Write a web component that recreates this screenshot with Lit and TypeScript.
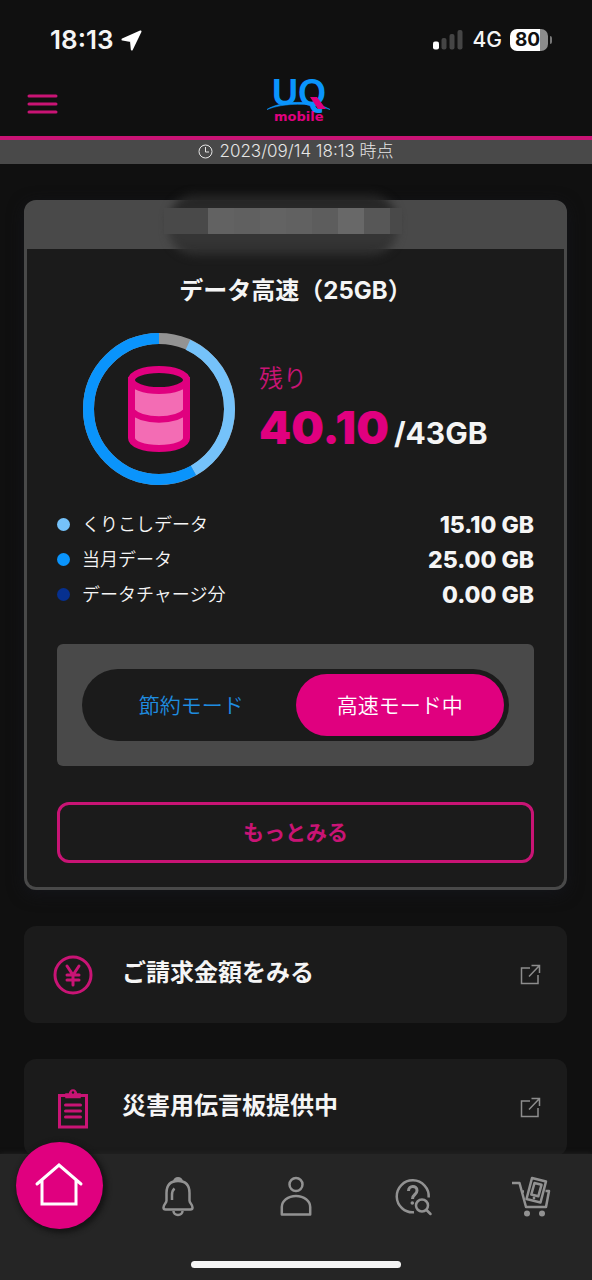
import { LitElement, html, svg, css } from "lit";
import { customElement, state } from "lit/decorators.js";
import { classMap } from "lit/directives/class-map.js";
import { styleMap } from "lit/directives/style-map.js";

interface DataBucket {
  label: string;
  amount: number;
  color: string;
}

const TOTAL_GB = 43;
const BUCKETS: DataBucket[] = [
  { label: "くりこしデータ", amount: 15.1, color: "#75c2fa" },
  { label: "当月データ", amount: 25, color: "#0a94fc" },
  { label: "データチャージ分", amount: 0, color: "#06308f" },
];
const REMAINING = BUCKETS.reduce((sum, b) => sum + b.amount, 0);

const yenIcon = svg`
  <circle cx="20" cy="20" r="18"/>
  <path d="M14 11l6 9 6-9M20 20v10M14 20h12M14 25h12" stroke-width="3"/>`;

const clipboardIcon = svg`
  <path d="M6.500 7.500h27v31.500h-27z"/>
  <path d="M13 9.500v-3.500h3.500a3.500 4 0 0 1 7 0h3.500v3.500z" fill="currentColor" stroke-width="1.500"/>
  <circle cx="20" cy="4.500" r="1.200" fill="#1b1b1b" stroke="none"/>
  <path d="M12.500 17h15M12.500 23h15M12.500 29h15" stroke-width="3"/>`;

const LINKS = [
  { label: "ご請求金額をみる", icon: yenIcon },
  { label: "災害用伝言板提供中", icon: clipboardIcon },
];

const TABS = [
  {
    label: "お知らせ",
    icon: svg`
      <path d="M16.500 4.500a3.500 3 0 0 1 7 0" stroke-width="3"/>
      <path d="M20 4c-8 0-11.500 5-11.500 12v7.500c0 3-3 3.500-3 7 0 1.500.8 2 2 2h25c1.200 0 2-.5 2-2 0-3.500-3-4-3-7v-7.500c0-7-3.500-12-11.500-12z"/>
      <path d="M14 23v-5c0-3 .7-5 2.500-6.500"/>
      <path d="M15.500 34a4.500 4 0 0 0 9 0"/>`,
  },
  {
    label: "お客さま情報",
    icon: svg`
      <circle cx="20" cy="7.500" r="6.500"/>
      <path d="M5.800 37.500v-7.500c0-6 6-11 14.200-11s14.200 5 14.200 11v7.500z"/>`,
  },
  {
    label: "サポート",
    icon: svg`
      <path d="M20 35.300a16 16 0 1 1 14.700-14.800"/>
      <path d="M14.500 14c0-6 8.500-6 8.500-.5 0 4.500-4.500 3.500-4.500 8.500" stroke-width="3"/>
      <circle cx="18.300" cy="26" r="1.800" fill="currentColor" stroke="none"/>
      <circle cx="28" cy="28.500" r="6"/>
      <path d="M32.500 33l4 4" stroke-linecap="round"/>`,
  },
  {
    label: "ショップ",
    icon: svg`
      <g transform="translate(-2 0)">
        <path d="M1 6h7.500l6.500 24h20l3-16h-3.500M11 14.500h2"/>
        <path d="M21 1l14 3.500-5.500 21-14-3.500z"/>
        <path d="M23.500 6l7 1.800-3.200 11.500-7-1.800z"/>
        <circle cx="23" cy="21" r="1.400" fill="currentColor" stroke="none"/>
        <circle cx="16" cy="36.500" r="3" fill="currentColor" stroke="none"/>
        <circle cx="31" cy="36.500" r="3" fill="currentColor" stroke="none"/>
      </g>`,
  },
];

@customElement("data-ring")
class DataRing extends LitElement {
  static styles = css`
    :host {
      display: grid;
      place-items: center;
      width: 152px;
      height: 152px;
    }
    .ring,
    .drum {
      grid-area: 1 / 1;
      display: block;
    }
    .ring {
      width: 100%;
      height: 100%;
      transform: rotate(-90deg);
    }
    .slice {
      fill: none;
      stroke-width: 11;
    }
  `;

  render() {
    let start = TOTAL_GB - REMAINING;
    const slices = BUCKETS.filter((b) => b.amount > 0).map((b) => {
      const slice = svg`<circle class="slice" cx="76" cy="76" r="70.500" stroke=${b.color}
        pathLength=${TOTAL_GB} stroke-dasharray="${b.amount} ${TOTAL_GB}" stroke-dashoffset=${-start}/>`;
      start += b.amount;
      return slice;
    });
    return html`
      <svg class="ring" viewBox="0 0 152 152" aria-hidden="true">
        <circle class="slice" cx="76" cy="76" r="70.500" stroke="#939393"></circle>
        ${slices}
      </svg>
      <svg class="drum" width="62" height="86" viewBox="0 0 62 86" aria-hidden="true">
        <path d="M3.500 14.500V72c0 6 12 10.500 27.500 10.500S58.500 78 58.500 72V14.500z" fill="#f36cb4" stroke="#e0007f" stroke-width="7"/>
        <ellipse cx="31" cy="14" rx="27.500" ry="10.500" fill="#1b1b1b" stroke="#e0007f" stroke-width="7"/>
        <path d="M3.500 45c5 5 14 8.500 27.500 8.500s22.500-3.500 27.500-8.500" fill="none" stroke="#e0007f" stroke-width="6.500"/>
      </svg>
    `;
  }
}

@customElement("app-root")
class AppRoot extends LitElement {
  @state() private fast = true;

  static styles = css`
    :host {
      --pink: #e0007f;
      --rose: #c91475;
      --panel: #1b1b1b;
      --edge: #494949;
      --white: #f5f5f5;
      --ui: Inter, "Noto Sans CJK JP", sans-serif;
      --jp: "Noto Sans CJK JP", sans-serif;
      display: block;
      min-height: 100vh;
      background: #101010;
      color: var(--white);
      font-family: var(--jp);
    }
    * {
      box-sizing: border-box;
    }
    button {
      border: 0;
      padding: 0;
      background: none;
      font: inherit;
      color: inherit;
      cursor: pointer;
    }
    a {
      color: inherit;
      text-decoration: none;
    }
    svg {
      display: block;
      flex: none;
      overflow: visible;
    }
    .status {
      display: flex;
      justify-content: space-between;
      align-items: center;
      height: 72px;
      padding: 8px 40px 0 50px;
      font-family: var(--ui);
    }
    .clock,
    .signal {
      display: flex;
      align-items: center;
      gap: 8px;
    }
    .clock {
      font-size: 26px;
      font-weight: 600;
      line-height: 32px;
    }
    .signal {
      font-size: 21px;
      font-weight: 500;
      line-height: 32px;
    }
    .battery {
      display: flex;
      align-items: center;
      gap: 2px;
    }
    .level {
      width: 38px;
      height: 22px;
      padding-right: 3px;
      border-radius: 7px;
      background: linear-gradient(90deg, #fff 80%, #8b8b8b 80%);
      color: #111;
      font-size: 19px;
      font-weight: 700;
      line-height: 22px;
      text-align: center;
    }
    .tip {
      width: 2px;
      height: 8px;
      border-radius: 0 2px 2px 0;
      background: #777;
    }
    .header {
      display: grid;
      grid-template-columns: 1fr auto 1fr;
      align-items: center;
      height: 68px;
      padding: 0 21px 0 27px;
      border-bottom: 4px solid var(--rose);
    }
    .menu {
      justify-self: start;
      color: var(--rose);
    }
    .mark {
      font: 700 36px "Liberation Sans", sans-serif;
      fill: #0a94fc;
    }
    .sub {
      font: 700 13px "DejaVu Sans", sans-serif;
      fill: var(--pink);
    }
    .asof {
      display: flex;
      justify-content: center;
      align-items: center;
      gap: 6px;
      height: 24px;
      padding-bottom: 2px;
      background: var(--edge);
      color: #e6e6e6;
      font-family: var(--ui);
      font-size: 17px;
      font-weight: 300;
      line-height: 20px;
    }
    .content {
      display: flex;
      flex-direction: column;
      gap: 36px;
      padding: 36px 25px 0 24px;
    }
    .card {
      border: 3px solid var(--edge);
      border-radius: 12px;
      background: var(--edge);
      box-shadow: 0 4px 16px #14151a;
    }
    .owner {
      display: flex;
      justify-content: center;
      height: 46px;
      padding-top: 5px;
      position: relative;
    }
    .smudge {
      position: absolute;
      top: -9px;
      width: 230px;
      height: 62px;
      left: 50%;
      margin-left: -128px;
      border-radius: 28px;
      background: linear-gradient(#222, #373737 70%, #2b2b2b);
      filter: blur(4px);
    }
    .mosaic {
      position: relative;
      display: flex;
      height: 26px;
      padding: 0 12px 0 44px;
      margin-right: 26px;
      background: var(--edge);
    }
    .tile {
      width: 26px;
    }
    .body {
      display: flex;
      flex-direction: column;
      padding: 24px 30px;
      border-radius: 0 0 9px 9px;
      background: var(--panel);
    }
    .title {
      margin: 0;
      font-family: var(--ui);
      font-size: 24px;
      font-weight: 700;
      line-height: 36px;
      text-align: center;
    }
    .usage {
      display: flex;
      align-items: center;
      gap: 24px;
      margin-top: 24px;
      padding-left: 26px;
    }
    .reading {
      padding-top: 6px;
    }
    .left {
      color: var(--rose);
      font-size: 24px;
      font-weight: 350;
      line-height: 36px;
    }
    .figures {
      display: flex;
      align-items: baseline;
      gap: 5px;
      font-family: var(--ui);
      line-height: 64px;
    }
    .remain {
      color: var(--pink);
      font-size: 46px;
      font-weight: 900;
    }
    .total {
      font-size: 30px;
      font-weight: 700;
    }
    .legend {
      margin: 22px 0 0;
    }
    .row {
      display: flex;
      align-items: center;
      gap: 12px;
      height: 35px;
    }
    .dot {
      width: 13px;
      height: 13px;
      border-radius: 50%;
    }
    .name {
      flex: 1;
      padding-bottom: 4px;
      font-size: 18px;
      font-weight: 350;
    }
    .amount {
      margin: 0;
      font-family: var(--ui);
      font-size: 23px;
      font-weight: 800;
    }
    .modes {
      margin-top: 32px;
      padding: 25px;
      border-radius: 6px;
      background: var(--edge);
    }
    .switch {
      display: grid;
      grid-template-columns: 1fr 1fr;
      height: 72px;
      padding: 5px;
      border-radius: 36px;
      background: var(--panel);
    }
    .mode {
      padding-bottom: 3px;
      border-radius: 31px;
      color: #1f8de0;
      font-size: 21px;
      font-weight: 350;
    }
    .mode.on {
      background: var(--pink);
      color: #fff;
    }
    .more {
      height: 61px;
      margin-top: 36px;
      padding-bottom: 4px;
      border: 3px solid var(--rose);
      border-radius: 12px;
      color: var(--rose);
      font-size: 21px;
      font-weight: 700;
    }
    .link {
      display: flex;
      align-items: center;
      gap: 29px;
      height: 97px;
      padding: 0 26px 0 29px;
      border-radius: 12px;
      background: var(--panel);
      font-size: 24px;
      font-weight: 700;
    }
    .glyph {
      color: var(--rose);
    }
    .text {
      flex: 1;
      padding-bottom: 8px;
    }
    .out {
      color: #8d8d8d;
    }
    .tabs {
      position: fixed;
      right: 0;
      bottom: 0;
      left: 0;
      padding-bottom: 12px;
      background: #252525;
      box-shadow: 0 0 5px #252525;
    }
    .tablist {
      display: grid;
      grid-template-columns: repeat(5, 1fr);
      height: 107px;
    }
    .tab {
      display: grid;
      place-items: center;
      padding-bottom: 22px;
      color: #929292;
    }
    .home {
      justify-self: center;
      display: grid;
      place-items: center;
      width: 87px;
      height: 87px;
      margin-top: -12px;
      padding-bottom: 4px;
      border-radius: 50%;
      background: var(--pink);
      box-shadow: 2px 2px 5px 2px #151515;
      color: #fff;
    }
    .grip {
      width: 210px;
      height: 7px;
      margin: 0 auto;
      border-radius: 4px;
      background: var(--white);
    }
  `;

  render() {
    const mosaic = ["#626262", "#606060", "#636363", "#616161", "#5d5d5d", "#686868", "#575757"];
    return html`
      <div class="status">
        <div class="clock">
          18:13
          <svg width="21" height="21" viewBox="0 0 21 21" aria-hidden="true">
            <path d="M19.500 1.500L1.500 9.500l8.500 1.500.8 8.500z" fill="#fff" stroke="#fff" stroke-width="2" stroke-linejoin="round" />
          </svg>
        </div>
        <div class="signal">
          <svg width="32" height="20" viewBox="0 0 32 20" aria-hidden="true">
            <rect x="0" y="11.500" width="6" height="8" rx="2" fill="#fff" />
            <rect x="8.500" y="8" width="5" height="11.500" rx="2" fill="#454545" />
            <rect x="16.500" y="4" width="5" height="15.500" rx="2" fill="#454545" />
            <rect x="24.500" y="0" width="5" height="19.500" rx="2" fill="#454545" />
          </svg>
          4G
          <div class="battery"><div class="level">80</div><div class="tip"></div></div>
        </div>
      </div>

      <header class="header">
        <button class="menu" aria-label="メニュー">
          <svg width="31" height="20" viewBox="0 0 31 20" fill="none" stroke="currentColor" stroke-width="3" stroke-linecap="round">
            <path d="M2 2h27M2 10h27M2 18h27" />
          </svg>
        </button>
        <a href="#" aria-label="UQ mobile">
          <svg width="66" height="50" viewBox="0 0 66 50">
            <text class="mark" x="6" y="26">UQ</text>
            <path d="M1 30.500C14 22 46 20 64 30.500 46 23 16 24 1 30.500z" fill="#0a94fc" stroke="#0a94fc" stroke-width=".6" />
            <path d="M44 18h7l9 12h-8z" fill="#e0007f" />
            <text class="sub" x="8" y="42">mobile</text>
          </svg>
        </a>
      </header>

      <div class="asof">
        <svg width="15" height="15" viewBox="0 0 15 15" fill="none" stroke="currentColor" aria-hidden="true">
          <circle cx="7.500" cy="7.500" r="6.500" />
          <path d="M7.500 3v5h3.500" />
        </svg>
        2023/09/14 18:13 時点
      </div>

      <main class="content">
        <section class="card">
          <div class="owner">
            <div class="smudge"></div>
            <div class="mosaic">
              ${mosaic.map((c) => html`<div class="tile" style=${styleMap({ background: c })}></div>`)}
            </div>
          </div>
          <div class="body">
            <h1 class="title">データ高速（25GB）</h1>
            <div class="usage">
              <data-ring></data-ring>
              <div class="reading">
                <div class="left">残り</div>
                <div class="figures">
                  <span class="remain">${REMAINING.toFixed(2)}</span>
                  <span class="total">/${TOTAL_GB}GB</span>
                </div>
              </div>
            </div>
            <dl class="legend">
              ${BUCKETS.map(
                (b) => html`
                  <div class="row">
                    <div class="dot" style=${styleMap({ background: b.color })}></div>
                    <dt class="name">${b.label}</dt>
                    <dd class="amount">${b.amount.toFixed(2)} GB</dd>
                  </div>
                `
              )}
            </dl>
            <div class="modes">
              <div class="switch" role="group" aria-label="通信モード">
                <button
                  class=${classMap({ mode: true, on: !this.fast })}
                  aria-pressed=${String(!this.fast)}
                  @click=${() => (this.fast = false)}
                >${this.fast ? "節約モード" : "節約モード中"}</button>
                <button
                  class=${classMap({ mode: true, on: this.fast })}
                  aria-pressed=${String(this.fast)}
                  @click=${() => (this.fast = true)}
                >${this.fast ? "高速モード中" : "高速モード"}</button>
              </div>
            </div>
            <button class="more">もっとみる</button>
          </div>
        </section>

        ${LINKS.map(
          (l) => html`
            <a class="link" href="#">
              <svg class="glyph" width="40" height="40" viewBox="0 0 40 40" fill="none" stroke="currentColor" stroke-width="3" stroke-linecap="round" aria-hidden="true">
                ${l.icon}
              </svg>
              <span class="text">${l.label}</span>
              <svg class="out" width="21" height="21" viewBox="0 0 21 21" fill="none" stroke="currentColor" stroke-width="1.500" aria-hidden="true">
                <path d="M10 4H1.500v15.500H18V11M11.500 1.500h8V9M19.500 1.500L9 12.500" />
              </svg>
            </a>
          `
        )}
      </main>

      <nav class="tabs">
        <div class="tablist">
          <a class="home" href="#" aria-label="ホーム" aria-current="page">
            <svg width="48" height="44" viewBox="0 0 48 44" fill="none" stroke="currentColor" stroke-width="3" stroke-linecap="round">
              <path d="M2 22L24 3l22 19M7 18v24h34V18" />
            </svg>
          </a>
          ${TABS.map(
            (t) => html`
              <a class="tab" href="#" aria-label=${t.label}>
                <svg width="40" height="40" viewBox="0 0 40 40" fill="none" stroke="currentColor" stroke-width="2.500" stroke-linejoin="round">
                  ${t.icon}
                </svg>
              </a>
            `
          )}
        </div>
        <div class="grip"></div>
      </nav>
    `;
  }
}
